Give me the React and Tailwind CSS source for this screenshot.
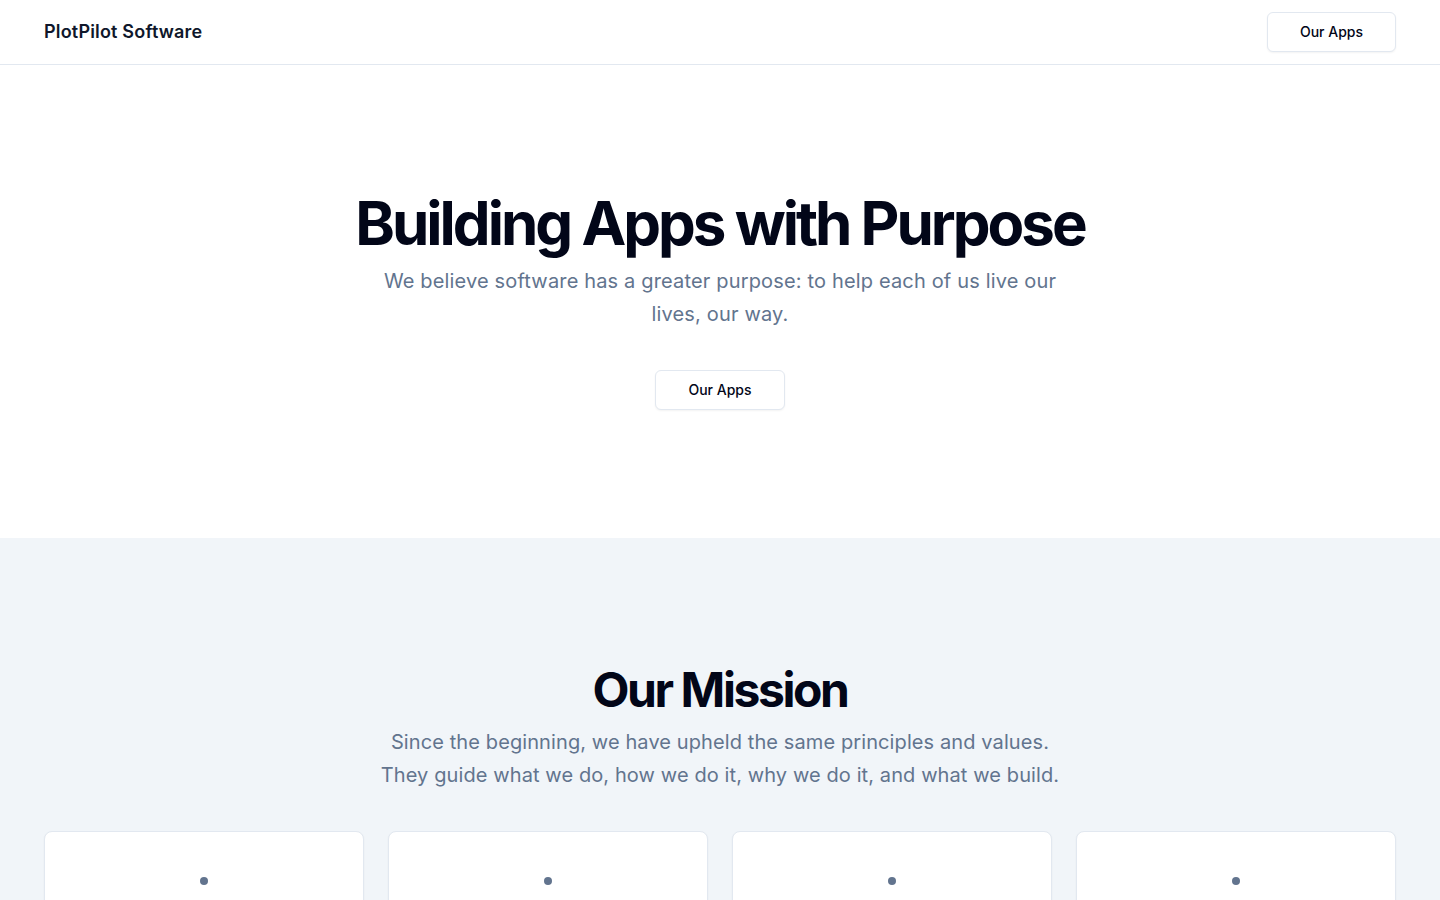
import React from 'react';

const principles = [
    { title: 'Purpose' },
    { title: 'Privacy' },
    { title: 'Craft' },
    { title: 'Care' },
];

const App = () => {
    return (
        <div className="min-h-screen bg-white font-['Inter',sans-serif] text-slate-950">
            <header className="flex h-[65px] items-center justify-between border-b border-slate-200 px-[44px]">
                <span className="text-lg font-semibold tracking-[0.01em] text-slate-900">PlotPilot Software</span>
                <button className="h-10 rounded-md border border-slate-200 bg-white px-8 text-sm font-medium text-slate-950 shadow-xs">
                    Our Apps
                </button>
            </header>

            <section className="flex flex-col items-center py-32 text-center">
                <h1 className="text-6xl leading-none font-bold tracking-tighter">Building Apps with Purpose</h1>
                <p className="mt-3 max-w-[680px] text-xl leading-relaxed tracking-[0.008em] text-slate-500">
                    We believe software has a greater purpose: to help each of us live our lives, our way.
                </p>
                <button className="mt-10 h-10 rounded-md border border-slate-200 bg-white px-8 text-sm font-medium text-slate-950 shadow-xs">
                    Our Apps
                </button>
            </section>

            <section className="bg-slate-100 px-[44px] pt-32 pb-32">
                <div className="flex flex-col items-center text-center">
                    <h2 className="text-5xl leading-none font-bold tracking-tighter">Our Mission</h2>
                    <p className="mt-3 text-xl leading-relaxed tracking-[0.005em] text-slate-500">
                        Since the beginning, we have upheld the same principles and values.
                        <br />
                        They guide what we do, how we do it, why we do it, and what we build.
                    </p>
                </div>
                <div className="mt-10 grid grid-cols-4 gap-6">
                    {principles.map((p) => (
                        <div key={p.title} className="flex h-64 flex-col items-center rounded-lg border border-slate-200 bg-white pt-[45px] shadow-xs">
                            <span className="h-2 w-2 rounded-full bg-slate-500"></span>
                        </div>
                    ))}
                </div>
            </section>
        </div>
    );
};

export default App;
